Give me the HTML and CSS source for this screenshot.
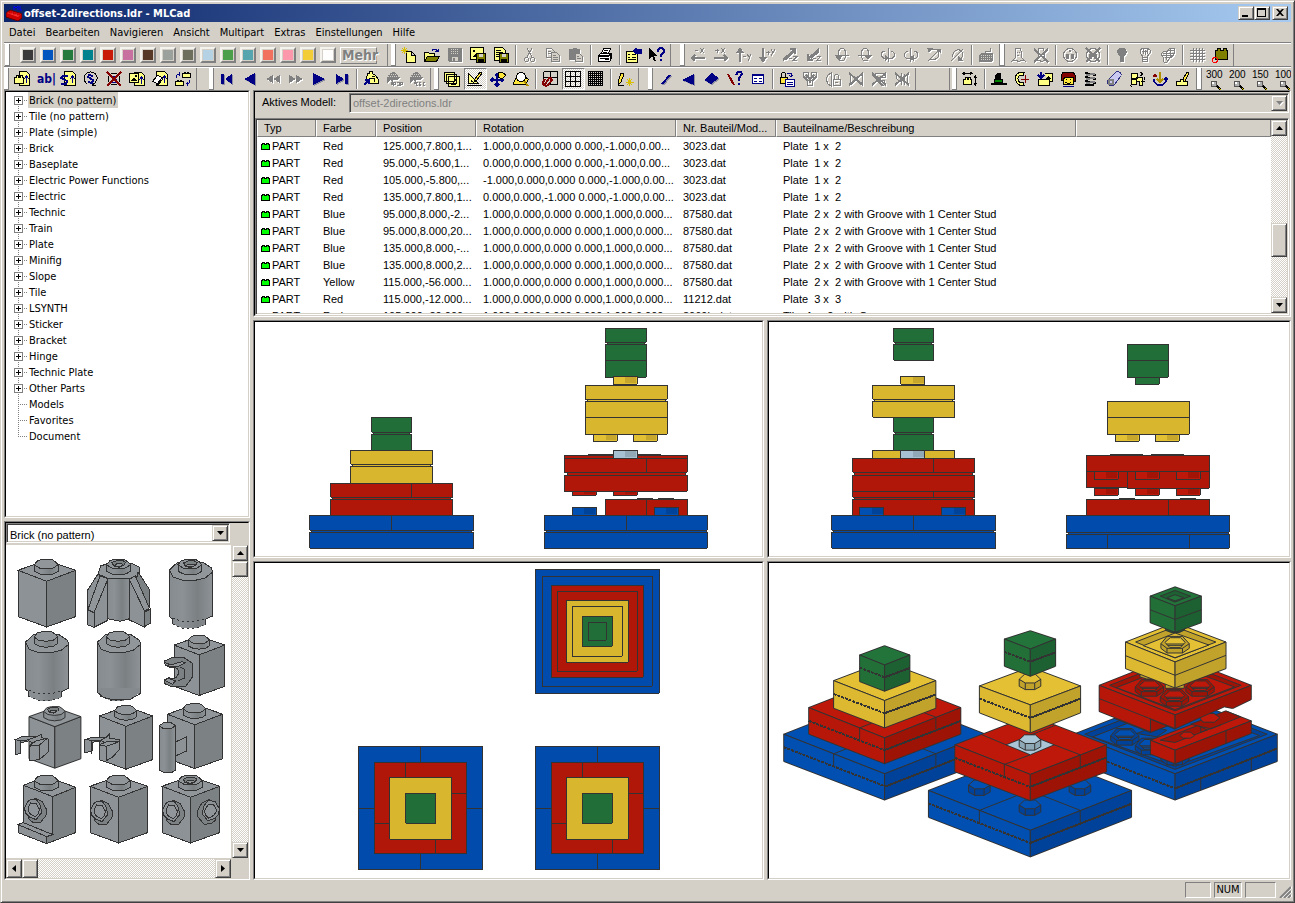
FILE: index.html
```html
<!DOCTYPE html>
<html lang="de">
<head>
<meta charset="utf-8">
<title>offset-2directions.ldr - MLCad</title>
<link rel="stylesheet" href="styles.css">
</head>
<body>
<div class="window">
<header class="titlebar">
  <svg class="app-icon" viewBox="0 0 16 16" aria-hidden="true"><path d="M8 1v4M12 1v4M8 1l2 2 2-2M14 1v4h2" stroke="#00f" fill="none"/><path d="M0 8l4-3 12 4v4l-4 3-12-4z" fill="#c00" stroke="#600"/><path d="M1 8l3-2 11 3-3 3z" fill="#f33"/><path d="M3 6h3v2H3zM7 7h3v2H7zM11 8h3v2h-3z" fill="#f00" stroke="#900" stroke-width=".6"/></svg>
  <h1>offset-2directions.ldr - MLCad</h1>
  <div class="caption-buttons">
    <button class="raised" aria-label="Minimieren"><svg viewBox="0 0 12 10"><path d="M2 7h6v2H2z"/></svg></button>
    <button class="raised" aria-label="Wiederherstellen"><svg viewBox="0 0 12 10"><path d="M1 0h9v9H1zM2 2v6h7V2z" fill-rule="evenodd"/></svg></button>
    <button class="raised close" aria-label="Schließen"><svg viewBox="0 0 12 10"><path d="M2 1h2l2 2 2-2h2L7 4.500 10 8H8L6 6 4 8H2l3-3.500z"/></svg></button>
  </div>
</header>
<nav class="menubar">
  <button>Datei</button><button>Bearbeiten</button><button>Navigieren</button><button>Ansicht</button><button>Multipart</button><button>Extras</button><button>Einstellungen</button><button>Hilfe</button>
</nav>

<div class="toolbar">
  <div class="group colors">
    <button class="swatch c-black" aria-label="Black"></button><button class="swatch c-blue" aria-label="Blue"></button><button class="swatch c-green" aria-label="Green"></button><button class="swatch c-teal" aria-label="Teal"></button><button class="swatch c-red" aria-label="Red"></button><button class="swatch c-pink" aria-label="Dark Pink"></button><button class="swatch c-brown" aria-label="Brown"></button><button class="swatch c-grey" aria-label="Grey"></button><button class="swatch c-dgrey" aria-label="Dark Grey"></button><button class="swatch c-lblue" aria-label="Light Blue"></button><button class="swatch c-bgreen" aria-label="Bright Green"></button><button class="swatch c-turq" aria-label="Turquoise"></button><button class="swatch c-salmon" aria-label="Salmon"></button><button class="swatch c-rose" aria-label="Pink"></button><button class="swatch c-yellow" aria-label="Yellow"></button><button class="swatch c-white" aria-label="White"></button>
    <button class="more" disabled>Mehr</button>
  </div>
  <div class="group file">
    <button aria-label="Neu"><svg viewBox="0 0 16 16"><path class="y" d="M5.500 4.500h5l4 4v7h-9zM10.500 4.500v4h4"/><path class="gold" d="M3.500 0v7M0 3.500h7M1 1l5 5M6 1l-5 5"/></svg></button>
    <button aria-label="Öffnen"><svg viewBox="0 0 16 16"><path class="y" d="M.5 13.500v-8h4l1 1h5v3"/><path class="olive" d="M.5 14.500l3-5h12l-3 5z"/><path class="ns" d="M8 3.500c2-2 4-2 6 1m0-3v3h-3"/></svg></button>
    <button aria-label="Speichern" disabled><svg viewBox="0 0 16 16"><path class="f" d="M1 1h14v14H2l-1-1z"/><path class="lt" d="M5 10h6v4H5z"/><path class="dots" d="M4 2.500h8M4 4.500h8M4 6.500h8"/><path class="f" d="M6 11h2v3H6z"/></svg></button>
    <button aria-label="Bild speichern"><svg viewBox="0 0 16 16"><path class="y" d="M.5.500h13v12H.5z"/><path class="f" d="M2 10l3-3 3 3zM3 3h2v2H3z"/><path class="olive" d="M6.500 6.500h9v9h-9z"/><path class="lt" d="M9 7h4v3H9z"/><path class="f" d="M8 12h6v3H8z"/></svg></button>
    <button aria-label="Liste speichern"><svg viewBox="0 0 16 16"><path class="y" d="M1.500.500h8l3 3v10h-11z"/><path d="M3 3.500h5M3 5.500h7M3 7.500h4M3 9.500h3"/><path class="olive" d="M6.500 6.500h9v9h-9z"/><path class="lt" d="M9 7h4v3H9z"/><path class="f" d="M8 12h6v3H8z"/></svg></button>
    <i class="sep"></i>
    <button aria-label="Ausschneiden" disabled><svg viewBox="0 0 16 16"><path d="M5 1l5 9M10 1l-5 9"/><circle cx="4.500" cy="12.500" r="2"/><circle cx="10.500" cy="12.500" r="2"/></svg></button>
    <button aria-label="Kopieren" disabled><svg viewBox="0 0 16 16"><path d="M1.500 1.500h5l3 3v6h-8zM3 4.500h3M3 6.500h4"/><path class="bg" d="M6.500 5.500h5l3 3v6h-8z"/><path d="M8 8.500h3M8 10.500h5M8 12.500h5"/></svg></button>
    <button aria-label="Einfügen" disabled><svg viewBox="0 0 16 16"><path class="f" d="M1 2h3l1-1h3l1 1h3v11H1z"/><path class="bg" d="M7.500 6.500h4l3 3v5h-7z"/><path d="M9 9.500h2M9 11.500h4"/></svg></button>
    <i class="sep"></i>
    <button aria-label="Drucken"><svg viewBox="0 0 16 16"><path class="w" d="M4.500 6.500l2-5h7l-2 5z"/><path class="w" d="M1.500 8.500l2-2h11v5l-2 3h-11z"/><path d="M2 8.500h11v5M2 9.500h10M3 11.500h8M1 14.500h11M12 8.500l2-2M7 3.500h4M6 5.500h4"/><path class="yd" d="M8.500 11.500h3v1h-3z"/></svg></button>
    <i class="sep"></i>
    <button aria-label="Eigenschaften"><svg viewBox="0 0 16 16"><path class="y" d="M.5 4.500h11v11H.5zM2 7.500h2M6 7.500h4M2 10.500h2M6 10.500h4M2 12.500h8"/><path class="n" d="M6 4l3-3 4 1h3v5h-4L9 7z"/></svg></button>
    <button aria-label="Hilfe"><svg viewBox="0 0 16 16"><path class="f" d="M0 1v11l3-3 2 5h2L5 9h4z"/><path class="ns2" d="M9 5V3l2-2h2l2 2v2l-3 3v2M12 12v2"/></svg></button>
  </div>
  <div class="group move">
    <button aria-label="-X" disabled><svg viewBox="0 0 16 16"><path class="s2" d="M3 11h12M5 8l-3 3 3 3"/><path d="M5 3.500h3M10 1l4 5M14 1l-4 5"/></svg></button>
    <button aria-label="+X" disabled><svg viewBox="0 0 16 16"><path class="s2" d="M1 11h12M11 8l3 3-3 3"/><path d="M2 3.500h4M4 1.500v4M8 1l4 5M12 1l-4 5"/></svg></button>
    <button aria-label="-Y" disabled><svg viewBox="0 0 16 16"><path class="s2" d="M4 15V3M1 6l3-4 3 4"/><path d="M7 9.500h3M11 7l2 3M15 7l-3 7"/></svg></button>
    <button aria-label="+Y" disabled><svg viewBox="0 0 16 16"><path class="s2" d="M4 1v12M1 10l3 4 3-4"/><path d="M7 5.500h4M9 3.500v4M12 2l2 4M16 2l-4 7"/></svg></button>
    <button aria-label="-Z" disabled><svg viewBox="0 0 16 16"><path class="s2" d="M1 13L12 3M8 2h5v5M3 13l8-8"/><path d="M7 11.500h3M11 9.500h4l-4 4h4"/></svg></button>
    <button aria-label="+Z" disabled><svg viewBox="0 0 16 16"><path class="s2" d="M14 2L3 12M3 7v6h5M14 4l-8 7"/><path d="M8 11.500h3M12 9.500h3l-3 4h4"/></svg></button>
    <i class="sep"></i>
    <button aria-label="Rotation X" disabled><svg viewBox="0 0 16 16"><path d="M1 8.500h14M4.500 12V6c0-6 7-6 7 0v4c-1 4-4 5-6 3M2 9l3 4 3-4"/><path class="f" d="M2 9h6l-3 4z"/></svg></button>
    <button aria-label="Rotation -X" disabled><svg viewBox="0 0 16 16"><path d="M1 8.500h14M11.500 12V6c0-6-7-6-7 0v4c1 4 4 5 6 3"/><path class="f" d="M8 9h6l-3 4z"/></svg></button>
    <button aria-label="Rotation Y" disabled><svg viewBox="0 0 16 16"><path d="M8.500 1v14M5 4.500H3C0 6 1 11 5 11.500h6c5-1 4-7 0-7"/><path class="f" d="M5 8v6l5-3z"/></svg></button>
    <button aria-label="Rotation -Y" disabled><svg viewBox="0 0 16 16"><path d="M7.500 1v14M11 4.500h2c3 2 2 7-2 7H5C0 11 1 4.500 5 4.500"/><path class="f" d="M11 8v6l-5-3z"/></svg></button>
    <button aria-label="Rotation Z" disabled><svg viewBox="0 0 16 16"><path d="M2 14L14 2M4 2.500h6c5 2 3 9-2 10H4"/><path class="f" d="M1 1h6L3 6zM10 2h5v4z"/></svg></button>
    <button aria-label="Rotation -Z" disabled><svg viewBox="0 0 16 16"><path d="M2 14L14 2M3.500 10c0-6 5-9 9-6 2 3 1 6-1 9"/><path class="f" d="M9 9v5h5z"/></svg></button>
    <i class="sep"></i>
    <button aria-label="Position eingeben" disabled><svg viewBox="0 0 16 16"><path class="f" d="M3 6h12v7l-1 2H1V9z"/><path class="dots" d="M3 8.500h11M3 10.500h11M3 12.500h10"/><path d="M7 6V4h5V1"/></svg></button>
  </div>
  <div class="group vis">
    <button aria-label="Geist" disabled><svg viewBox="0 0 16 16"><path d="M5 11V4c0-4 6-4 6 0v6l4 4-4-1-2 2-3-2-4 1zM7 5v1M9 5v1M7 8h2"/></svg></button>
    <button aria-label="Geist aus" disabled><svg viewBox="0 0 16 16"><path d="M5 11V4c0-4 6-4 6 0v6l4 4-4-1-2 2-3-2-4 1z"/><path class="s2" d="M1 2l14 13M15 2L1 15"/></svg></button>
    <i class="sep"></i>
    <button aria-label="Verstecken" disabled><svg viewBox="0 0 16 16"><circle cx="8" cy="8" r="6.500"/><path class="f" d="M7 3h2v2H7zM4 7h3v5H4zM9 7h3v5H9z"/></svg></button>
    <button aria-label="Einblenden" disabled><svg viewBox="0 0 16 16"><circle cx="8" cy="8" r="6.500"/><path class="f" d="M4 7h3v5H4zM9 7h3v5H9z"/><path class="s2" d="M1 1l14 14M15 1L1 15"/></svg></button>
    <i class="sep"></i>
    <button aria-label="Licht" disabled><svg viewBox="0 0 16 16"><path class="f" d="M4 2l2-1h4l2 1 1 3-2 4H5L3 5zM6 9h4v6H6z"/></svg></button>
    <button aria-label="Licht umschalten" disabled><svg viewBox="0 0 16 16"><path d="M5.500 9L3 6V3l3-2h4l3 2v3l-2.500 3v5h-5z"/><path d="M5 4.500h6M6 2v5M10 2v5M8 3v5"/><path d="M6 10.500h4M6 12.500h4"/></svg></button>
    <button aria-label="Alle Lichter" disabled><svg viewBox="0 0 16 16"><path d="M3 10L1 7l3-3 3 1 3-4h4l1 4-2 4-3 2-3 4H4z"/><path d="M3 6.500h11M3 8.500h10M5 10.500h6M8 3.500h6M6 5v8M10 2v8"/></svg></button>
    <i class="sep"></i>
    <button aria-label="Raster" disabled><svg viewBox="0 0 16 16"><path d="M4.500 1v14M7.500 1v14M10.500 1v14M13.500 1v14M1 3.500h15M1 6.500h15M1 9.500h15M1 12.500h15"/></svg></button>
    <button aria-label="Ursprung"><svg viewBox="0 0 16 16"><path class="olive" d="M3.500 12.500v-9h2v-2h3v2h3v-2h3v2h1v9z"/><circle class="redo" cx="3" cy="13" r="2.500"/></svg></button>
  </div>
</div>

<div class="toolbar second">
  <div class="group add">
    <button aria-label="Bauteil"><svg viewBox="0 0 16 16"><path class="y" d="M5.500.500h7l3 3v11h-10z"/><path class="y" d="M.5 12.500v-6h2v-2h2v2h2v-2h2v2h1v6z"/><path class="ns" d="M12.500 12V6M10 8l2.500-3 2.500 3"/></svg></button>
    <button aria-label="Kommentar"><span class="abl">ab|</span></button>
    <button aria-label="Schritt"><svg viewBox="0 0 16 16"><path class="y" d="M4.500.500h8l3 3v11h-11z"/><path class="ns2" d="M8 5H3L1 7l6 3-1 3H1"/><path class="ns" d="M12.500 12V6M10 8l2.500-3 2.500 3"/></svg></button>
    <button aria-label="Rotationsschritt"><svg viewBox="0 0 16 16"><path d="M4 13C0 10 0 4 5 1.500c5-2 10 2 9 7-1 2-2 4-4 5M9 11v3h4"/><path class="ns2" d="M10 5L6 4 5 6l5 3-1 3-4-1"/></svg></button>
    <button aria-label="Schritt löschen"><svg viewBox="0 0 16 16"><circle cx="8" cy="8" r="6"/><path class="ns" d="M10 5H7v3h3v3H6"/><path class="rs2" d="M1 1l14 14M15 1L1 15"/></svg></button>
    <button aria-label="Hintergrund"><svg viewBox="0 0 16 16"><path class="y" d="M5.500 1.500h7l3 3v10h-10z"/><path class="y" d="M.5 2.500h9v9h-9z"/><path class="f" d="M2 10l3-4 3 4zM6 4h2v2H6z"/><path class="ns" d="M12.500 13V7M10 9l2.500-3 2.500 3"/></svg></button>
    <button aria-label="Leeren"><svg viewBox="0 0 16 16"><path class="y" d="M4.500.500h8l3 3v11h-11z"/><path class="w" d="M.5 10.500l5-6 5 2-5 6zM5.500 12.500v2l5-6v-2"/><path class="ns" d="M12.500 12V6M10 8l2.500-3 2.500 3"/></svg></button>
    <button aria-label="Ersetzen"><svg viewBox="0 0 16 16"><path class="y" d="M7.500 6.500v-4h2v-1h1v1h2v-1h1v1h2v4zM.5 14.500v-4h2v-1h1v1h2v-1h1v1h2v4z"/><path class="ns" d="M1 7c0-4 2-4 4-4M4 1v4M15 9c0 4-2 4-4 4M12 11v4"/></svg></button>
  </div>
  <div class="group navi">
    <button aria-label="Anfang"><svg viewBox="0 0 16 16"><path class="n sh" d="M2 3h3v10H2zM13 3v10L6 8z"/></svg></button>
    <button aria-label="Zurück"><svg viewBox="0 0 16 16"><path class="n sh" d="M13 2v12L2 8z"/></svg></button>
    <button aria-label="Schnell zurück" disabled><svg viewBox="0 0 16 16"><path class="f" d="M8 4v8L1 8zM15 4v8L8 8z"/></svg></button>
    <button aria-label="Schnell vor" disabled><svg viewBox="0 0 16 16"><path class="f" d="M1 4v8l7-4zM8 4v8l7-4z"/></svg></button>
    <button aria-label="Vor"><svg viewBox="0 0 16 16"><path class="n sh" d="M2 2v12l12-6z"/></svg></button>
    <button aria-label="Ende"><svg viewBox="0 0 16 16"><path class="n sh" d="M2 3v10l8-5zM11 3h3v10h-3z"/></svg></button>
    <i class="sep"></i>
    <button aria-label="Modell"><svg viewBox="0 0 16 16"><path class="y" d="M3.500 8.500l1-6h2v-2h3v2l3 2 3 4v4h-9l-2-2zM6 7.500h5v3M9 5.500h3"/><path class="ns2" d="M1 14l5-5M2 9h4v4"/></svg></button>
    <button aria-label="POP" disabled><svg viewBox="0 0 16 16"><path class="f" d="M1 7l3-5 4-1 6 5-2 3H7v5H5V8l-4 4z"/><path class="dots" d="M2 5.500h11M3 3.500h8M5 10.500h2"/><path d="M7.500 15v-4h2v2h-2M11 11h2v3h-2M14.500 15v-4H16v2h-2"/></svg></button>
    <button aria-label="CEC" disabled><svg viewBox="0 0 16 16"><path class="f" d="M1 7l3-5 4-1 6 5-2 3H7v4H5V8l-4 4z"/><path class="dots" d="M2 5.500h11M3 3.500h8M5 10.500h2"/><path d="M9 11.500H7v3h2M12 11h-2v3.500h2M10 13h2M16 11.500h-2v3h2"/></svg></button>
  </div>
  <div class="group mode">
    <button aria-label="Ansicht"><svg viewBox="0 0 16 16"><path class="y" d="M.5 1.500h10v9H.5zM2.500 3.500h10v9h-10zM4.500 5.500h11v10h-11z"/><path class="f" d="M6 14l3-3 3 3zM11 8h2v2h-2z"/></svg></button>
    <button class="pressed" aria-label="Bearbeiten"><svg viewBox="0 0 16 16"><path class="y" d="M1.500 2.500v10h10zM4 8.500v2h2"/><path d="M0 14.500h15"/><path class="yd" d="M8 8l5-7 2 1-5 7-3 2z"/></svg></button>
    <button aria-label="Verschieben"><svg viewBox="0 0 16 16"><path class="ns2" d="M1 9h12M7 3v12M3 7L1 9l2 2M5 5l2-2 2 2M5 13l2 2 2-2M11 7l2 2-2 2"/><path class="yd" d="M8 2l4-1 4 3-4 4-4-2z"/></svg></button>
    <button aria-label="Zoom"><svg viewBox="0 0 16 16"><path class="yd" d="M.5 12.500l3-7h8l4 3-3 5h-12z"/><circle class="w" cx="8" cy="6" r="4.500"/><path class="gold2" d="M11 10l4 5"/></svg></button>
    <i class="sep"></i>
    <button aria-label="Einrasten"><svg viewBox="0 0 16 16"><path d="M1.500.500h14v13h-9M1.500 8V.5M8.500 1v12M2 6.500h14"/><path class="rs2" d="M8 6L3 13c-1 1-3 0-2-2l2-3M8 6l2 3-4 5c-1 1-3 1-4 0"/></svg></button>
    <button class="pressed" aria-label="Raster grob"><svg viewBox="0 0 16 16"><path d="M.5.500h15v15H.5zM5.500 0v16M10.500 0v16M0 5.500h16M0 10.500h16"/></svg></button>
    <button aria-label="Raster fein"><svg viewBox="0 0 16 16"><path d="M2.500 1v14M4.500 1v14M6.500 1v14M8.500 1v14M10.500 1v14M12.500 1v14M1 2.500h14M1 4.500h14M1 6.500h14M1 8.500h14M1 10.500h14M1 12.500h14"/><path d="M.5.500h14v14H.5z"/></svg></button>
    <i class="sep"></i>
    <button aria-label="Zeichnen"><svg viewBox="0 0 16 16"><path class="yd" d="M1 11l3-9 3 1-3 8-3 3z"/><path d="M1 14.500h6"/><path class="gold" d="M12.500 7v8M8.500 11h8M10 8l5 6M15 8l-5 6"/></svg></button>
  </div>
  <div class="group prim">
    <button aria-label="Linie"><svg viewBox="0 0 16 16"><path class="ns2 sh" d="M4 13l8-9"/></svg></button>
    <button aria-label="Dreieck"><svg viewBox="0 0 16 16"><path class="n sh" d="M1 9l12-6v11z"/></svg></button>
    <button aria-label="Viereck"><svg viewBox="0 0 16 16"><path class="n sh" d="M0 9l8-7 7 5-8 6z"/></svg></button>
    <button aria-label="Optionale Linie"><svg viewBox="0 0 16 16"><path class="rs2" d="M1 3l6 11"/><path class="ns2" d="M9 4l2-3h3l1 2-3 4v3M12 12v2"/></svg></button>
    <button aria-label="Tabelle"><svg viewBox="0 0 16 16"><path class="wn" d="M2.500 3.500h11v9h-11z"/><path class="ns" d="M2 4.500h12M4 7h3M9 7h3M4 10h3M9 10h3"/></svg></button>
    <i class="sep"></i>
    <button aria-label="Gruppe sperren"><svg viewBox="0 0 16 16"><path class="yd" d="M1 6h7v6H1z"/><path d="M2.500 6V3l1-2h2l1 2v3"/><path class="wn" d="M6.500 8.500h9v7h-9zM8 11.500h6M8 13.500h6"/><path class="ns" d="M8 2h4v4M10 4l2 2 2-2"/></svg></button>
    <button aria-label="Gruppe" disabled><svg viewBox="0 0 16 16"><circle cx="4" cy="4" r="3"/><circle cx="12" cy="4" r="3"/><circle cx="8" cy="12" r="3"/><path class="s2" d="M4 4l4 4 4-4M8 8v4M2 6l4 4M14 6l-4 4"/></svg></button>
    <button aria-label="Teile sperren" disabled><svg viewBox="0 0 16 16"><path d="M6 2L3 4 1 8l2 5 3 2V2zM9.500 8V5l1-2h2l1 2v3M8 8.500h7v6H8zM10 11.500h3"/></svg></button>
    <button aria-label="Lösen" disabled><svg viewBox="0 0 16 16"><path d="M3 4l5 5-5 5M13 4L8 9l5 5M2 3v11M14 3v11"/><path class="s2" d="M1 2l14 12M15 2L1 14"/></svg></button>
    <button aria-label="Auflösen" disabled><svg viewBox="0 0 16 16"><path d="M4 2.500h10v4H4zM6 9.500h7v4"/><path class="s2" d="M1 2l14 12M15 2L1 14M2 4l10 11"/></svg></button>
    <button aria-label="Alle lösen" disabled><svg viewBox="0 0 16 16"><path d="M4 3L2 7l3 3-3 4M13 2v12M10 3v11M7 2v12"/><path class="s2" d="M1 2l14 12M15 2L1 14"/></svg></button>
  </div>
  <i class="blank"></i>
  <div class="group gen">
    <button aria-label="Maße"><svg viewBox="0 0 16 16"><path class="y" d="M1.500 13.500v-5h2v-2h2v2h1v-2h2v2h1v5z"/><path d="M1 2.500h9M3 1L1 2.500 3 4M8 1l2 1.500L8 4M13.500 5v9M12 7l1.500-2L15 7M12 12l1.500 2 1.500-2"/></svg></button>
    <i class="sep"></i>
    <button aria-label="Grundplatte"><svg viewBox="0 0 16 16"><path class="f" d="M0 12h16v2H0z"/><path class="gr" d="M3.500 11.500v-3h8v3z"/><path class="f" d="M4 4l2-2h4v6H4z"/></svg></button>
    <button aria-label="Kreis"><svg viewBox="0 0 16 16"><path class="y" d="M10 1.500C4 0 1 4 1.500 8S5 15.500 10 14.500l-1-3c-3 1-5-1-5-4s3-4 5-3z"/><path class="rs" d="M7 8h8M11 4v8"/></svg></button>
    <button aria-label="Bild"><svg viewBox="0 0 16 16"><path class="y" d="M1.500 8.500h11v6h-11zM7.500 2.500h8v8h-3"/><path class="ns2" d="M4 1v5M1 4l3 3 3-3"/><path class="f" d="M8 8l3-3 3 3z"/></svg></button>
    <button aria-label="Minifigur"><svg viewBox="0 0 16 16"><path class="yd" d="M3 4h10v9H3z"/><path class="mar" d="M1 5l2-4h10l2 3v6h-2V6H5L3 9H1z"/><path d="M6 8v1M10 8v1M5 11l2 1h3l1-1"/><path class="ns" d="M3 15h11"/></svg></button>
    <button aria-label="Feder"><svg viewBox="0 0 16 16"><path class="s2" d="M2 2l11 2M2 6l11 2M2 10l11 2M2 14h9"/><path class="g2" d="M3 4l9-1M3 8l9-1M3 12l9-1"/></svg></button>
    <button aria-label="Schlauch"><svg viewBox="0 0 16 16"><path class="lav" d="M2 9l8-8c3-1 6 1 5 4l-7 9c-4 2-8-1-6-5z"/><circle class="g2" cx="5" cy="11" r="2.500"/></svg></button>
    <button aria-label="Rotor"><svg viewBox="0 0 16 16"><path class="y" d="M2.500 2.500h6v5h-6zM7.500 6.500h6v8h-3v-4h-3z"/><circle class="y" cx="5" cy="11" r="3"/><path class="dk" d="M11 1l3 2-3 2M15 6v3M1 14l2 2M12 10h4"/></svg></button>
    <button aria-label="Drehpunkt"><svg viewBox="0 0 16 16"><path class="ns2" d="M2 8c0 8 12 8 12 0M12 9l2-2 2 2"/><path class="rs2" d="M1 5h4M3 3v3"/><path class="gold2" d="M8 1v9M5 8l3 3 3-3"/></svg></button>
    <button aria-label="Text"><svg viewBox="0 0 16 16"><path class="y" d="M1.500 14.500v-4h4v-2h3v2h4v4z"/><path class="yd" d="M8 8l4-7 2 1-4 8-2 1z"/></svg></button>
  </div>
  <div class="group zoom">
    <button aria-label="Zoom 300"><span>300</span><svg viewBox="0 0 16 8"><use href="#lens"/></svg></button>
    <button aria-label="Zoom 200"><span>200</span><svg viewBox="0 0 16 8"><use href="#lens"/></svg></button>
    <button aria-label="Zoom 150"><span>150</span><svg viewBox="0 0 16 8"><use href="#lens"/></svg></button>
    <button aria-label="Zoom 100"><span>100</span><svg viewBox="0 0 16 8"><use href="#lens"/></svg></button>
  </div>
</div>

<svg class="defs" aria-hidden="true"><defs>
  <g id="lens"><circle cx="6" cy="4" r="3" fill="#b0b0b0" stroke="#555"/><path d="M4 2h2v2H4z" fill="#fff" stroke="none"/><path d="M9 6l4 4" stroke="#000" stroke-width="2" fill="none"/><path d="M11 8l2 2" stroke="#dc0" fill="none"/></g>
  <linearGradient id="cyl"><stop offset="0" stop-color="#868c90"/><stop offset=".3" stop-color="#8b9195"/><stop offset=".65" stop-color="#7b8083"/><stop offset="1" stop-color="#8d9397"/></linearGradient>
  <g id="studtop"><path fill="url(#cyl)" d="M0 16v20l16 8 20 3 22-3 13-8V16z"/><path class="pt" d="M10 4L26 0h26l12 8 7 8-13 10-22 3-22-3L0 16z"/></g>
  <g id="hole"><path class="pr" d="M22 10l14-6h18l9 5-6 9-14 6-16-4z"/><path class="pt" d="M28 19l8-5h16l4 4-12 4z"/></g>
  <g id="cube"><path class="pl" d="M0 33l86 33v137L0 172z"/><path class="pr" d="M86 66l87-33v139l-87 31z"/><path class="pt" d="M0 33L86 3l87 30-87 33z"/><use href="#studtop" x="49" y="0"/></g>
  <g id="round"><path fill="url(#cyl)" stroke="none" d="M0 32v140l10 8v15l30 12h38l30-10v-17l22-10V32z"/><path d="M0 32v140l10 8v15M130 32v138l-22 10v17"/><path class="dash" d="M10 176l26 10h44l28-8M10 195l30 12h38l30-10"/><path class="pt" d="M0 32l24-22h78l24 16 4 12-22 18-34 8H44L12 54z"/><use href="#studtop" x="26"/></g>
  <g id="sidestud"><path class="pr" d="M14 8L32 0l20 10 14 24-2 18-18 22-22-2L10 60z"/><path class="pl" d="M0 28L12 6l22-4 14 20 2 22-16 20-20-8L2 44z"/><path class="pt" d="M10 28l8-14 16 2 10 16-2 14-10 10-14-8-8-10z"/></g>
  <g id="pyramid-top">
    <path class="blue" d="M0 0h124v124H0z"/><path class="blue" d="M62 0v16M62 108v16M0 62h16M108 62h16"/>
    <path class="red" d="M16 16h92v92H16z"/><path class="red" d="M47 16v15M93 47h15M16 77h15M77 93v15"/>
    <path class="yellow" d="M31 31h62v62H31z"/><path class="green" d="M47 47h30v30H47z"/>
  </g>
  <g id="stud3d"><path class="sr" d="M0 17v21l18 10h28l18-10V17L46 26H18z"/><path class="sd" d="M18 26v22M46 26v22"/><path class="st" d="M0 17L16 2h32l16 15-18 11H18z"/></g>
  <g id="tube"><path class="sr" d="M0 28L18 6h46l20 22v14L64 56H18L0 42z"/><path class="st" d="M12 24l16-14h30l14 14-14 15H26z"/><path class="sd" d="M16 29h52M20 33h44M0 28l18 14v14M84 28L64 42v14M18 42h46"/></g>
</defs></svg>

<main class="workspace">
  <div class="left">
    <section class="pane tree" aria-label="Bauteile">
      <ul>
        <li class="branch"><button aria-label="Aufklappen"></button><a class="selected" href="#">Brick (no pattern)</a></li>
        <li class="branch"><button aria-label="Aufklappen"></button><a href="#">Tile (no pattern)</a></li>
        <li class="branch"><button aria-label="Aufklappen"></button><a href="#">Plate (simple)</a></li>
        <li class="branch"><button aria-label="Aufklappen"></button><a href="#">Brick</a></li>
        <li class="branch"><button aria-label="Aufklappen"></button><a href="#">Baseplate</a></li>
        <li class="branch"><button aria-label="Aufklappen"></button><a href="#">Electric Power Functions</a></li>
        <li class="branch"><button aria-label="Aufklappen"></button><a href="#">Electric</a></li>
        <li class="branch"><button aria-label="Aufklappen"></button><a href="#">Technic</a></li>
        <li class="branch"><button aria-label="Aufklappen"></button><a href="#">Train</a></li>
        <li class="branch"><button aria-label="Aufklappen"></button><a href="#">Plate</a></li>
        <li class="branch"><button aria-label="Aufklappen"></button><a href="#">Minifig</a></li>
        <li class="branch"><button aria-label="Aufklappen"></button><a href="#">Slope</a></li>
        <li class="branch"><button aria-label="Aufklappen"></button><a href="#">Tile</a></li>
        <li class="branch"><button aria-label="Aufklappen"></button><a href="#">LSYNTH</a></li>
        <li class="branch"><button aria-label="Aufklappen"></button><a href="#">Sticker</a></li>
        <li class="branch"><button aria-label="Aufklappen"></button><a href="#">Bracket</a></li>
        <li class="branch"><button aria-label="Aufklappen"></button><a href="#">Hinge</a></li>
        <li class="branch"><button aria-label="Aufklappen"></button><a href="#">Technic Plate</a></li>
        <li class="branch"><button aria-label="Aufklappen"></button><a href="#">Other Parts</a></li>
        <li><a href="#">Models</a></li>
        <li><a href="#">Favorites</a></li>
        <li><a href="#">Document</a></li>
      </ul>
    </section>
    <section class="pane parts">
      <div class="combo"><select aria-label="Gruppe"><option>Brick (no pattern)</option></select><span class="arrow raised"><svg viewBox="0 0 7 4"><path d="M0 0h7L3.500 4z"/></svg></span></div>
      <div class="thumbs">
        <svg viewBox="18 111 675 936" role="img" aria-label="Bauteilvorschau">
          <use href="#cube" x="54" y="153"/>
          <g transform="translate(262 153)">
            <path class="pt" d="M32 44l8-24 24-8h70l22 12v26l-30 10H66z"/>
            <path fill="url(#cyl)" d="M60 58h68v120l-30 8-38-8z"/>
            <path class="pl" d="M32 44l-32 50v60l6-4 42-94z"/><path class="pl" d="M20 160l40-102v126l-40 20z"/><path class="pt" d="M38 50l24 8-42 102L2 150z"/><path class="pl" d="M0 152l20 8v44L0 196z"/>
            <path class="pr" d="M152 38l34 52v52l-6 4-34-78z"/><path class="pl" d="M126 60l46 96v48l-46-22z"/><path class="pt" d="M126 60l18-10 42 96-14 10z"/><path class="pr" d="M172 158l16-8v42l-16 10z"/>
            <use href="#studtop" x="58"/><use href="#hole" x="52"/>
          </g>
          <use href="#round" x="508" y="153"/><use href="#hole" x="529" y="154"/>
          <use href="#round" x="76" y="370"/>
          <use href="#round" x="292" y="370"/><path class="cylfill" d="M294 538v16l20 12 20 8h52l34-20v-16z"/><path d="M292 536v16l20 16 28 7h48l34-20v-16"/>
          <use href="#cube" transform="translate(522 381) scale(.88 .89)"/>
          <path class="pr" d="M494 458l22-10h36l24 16v44l-20 28h-40l-22-10v-12l12-6 16 4c20-12 16-36-2-34-14 2-26-6-26-20z"/><path class="pt" d="M494 462l18 8 34-10 10 4-24 12-36-4zM494 516l12-6 20 8-8 10z"/><path d="M576 466v44M540 476l12 6v28l-18 8"/>
          <use href="#cube" transform="translate(87 595) scale(.9 .91)"/><use href="#hole" transform="translate(124 594) scale(.85)"/>
          <path class="pl" d="M46 694l18-8h44l16-8v10l20 4v40l-26 22-30 4v-42l18-10-20-8-24 6v30l-16 6z"/><path class="pt" d="M88 712l20-14 34-8-26 22zM46 694l18-8h44l-28 10-16 2z"/><path d="M88 712v46M118 712v40M62 698v40"/>
          <use href="#cube" transform="translate(298 592) scale(.93 .94)"/>
          <path class="pl" d="M254 694l20-6h44l10-10v12l30 4v30l-20 22-24 14-16-6v-44l18-6-10-6-30 4v26l-22 6z"/><path class="pt" d="M298 710l22-10h38l-38 14zM254 694l20-6h44l-20 10z"/><path d="M298 712v42M320 714v44M274 698v40"/>
          <use href="#cube" transform="translate(502 586) scale(.96)"/>
          <path class="pl" d="M524 702l36-16v42l-36 16z"/><path fill="url(#cyl)" d="M478 652v134l14 6h24l10-6V652z"/><path class="pt" d="M478 652l12-8h24l12 8-12 9h-24z"/>
          <g transform="translate(54 801)"><path class="pl" d="M16 30l88 34v116l-88-34z"/><path class="pr" d="M104 64l69-28v136l-87 33v-24l18-8z"/><path class="pt" d="M16 30l70-26 87 32-69 28z"/><path class="pt" d="M0 148l16-6 88 36-18 6z"/><path class="pl" d="M0 148l86 36v21L0 172z"/><use href="#studtop" x="49"/></g><use href="#sidestud" x="74" y="870"/>
          <use href="#cube" x="270" y="801"/><use href="#sidestud" x="272" y="876"/>
          <use href="#cube" x="486" y="801"/><use href="#hole" x="528" y="803"/><use href="#sidestud" x="488" y="876"/><use href="#sidestud" transform="matrix(-1 0 0 1 658 874)"/>
        </svg>
      </div>
      <div class="scroll v"><button class="raised" aria-label="Nach oben"><svg viewBox="0 0 7 4"><path d="M0 4h7L3.500 0z"/></svg></button><span class="thumb raised"></span><button class="raised last" aria-label="Nach unten"><svg viewBox="0 0 7 4"><path d="M0 0h7L3.500 4z"/></svg></button></div>
      <div class="scroll h"><button class="raised" aria-label="Nach links"><svg viewBox="0 0 4 7" class="side"><path d="M4 0v7L0 3.500z"/></svg></button><span class="thumb raised"></span><button class="raised last" aria-label="Nach rechts"><svg viewBox="0 0 4 7" class="side"><path d="M0 0v7l4-3.500z"/></svg></button></div>
    </section>
  </div>

  <div class="right">
    <section class="pane model">
      <div class="active-model"><label for="model">Aktives Modell:</label>
        <div class="combo disabled"><select id="model" disabled><option>offset-2directions.ldr</option></select><span class="arrow raised"><svg viewBox="0 0 7 4"><path d="M0 0h7L3.500 4z"/></svg></span></div>
      </div>
      <div class="list">
        <div class="rows">
        <table>
          <colgroup><col class="w-typ"><col class="w-farbe"><col class="w-pos"><col class="w-rot"><col class="w-nr"><col class="w-name"><col></colgroup>
          <thead><tr><th>Typ</th><th>Farbe</th><th>Position</th><th>Rotation</th><th>Nr. Bauteil/Mod...</th><th>Bauteilname/Beschreibung</th><th></th></tr></thead>
          <tbody>
            <tr><td><svg class="pi" viewBox="0 0 9 8"><path d="M.5 7.500v-5h1v-1h2v1h2v-1h2v1h1v5z"/></svg>PART</td><td>Red</td><td>125.000,7.800,1...</td><td>1.000,0.000,0.000 0.000,-1.000,0.00...</td><td>3023.dat</td><td>Plate  1 x  2</td><td></td></tr>
            <tr><td><svg class="pi" viewBox="0 0 9 8"><path d="M.5 7.500v-5h1v-1h2v1h2v-1h2v1h1v5z"/></svg>PART</td><td>Red</td><td>95.000,-5.600,1...</td><td>0.000,0.000,1.000 0.000,-1.000,0.00...</td><td>3023.dat</td><td>Plate  1 x  2</td><td></td></tr>
            <tr><td><svg class="pi" viewBox="0 0 9 8"><path d="M.5 7.500v-5h1v-1h2v1h2v-1h2v1h1v5z"/></svg>PART</td><td>Red</td><td>105.000,-5.800,...</td><td>-1.000,0.000,0.000 0.000,-1.000,0.00...</td><td>3023.dat</td><td>Plate  1 x  2</td><td></td></tr>
            <tr><td><svg class="pi" viewBox="0 0 9 8"><path d="M.5 7.500v-5h1v-1h2v1h2v-1h2v1h1v5z"/></svg>PART</td><td>Red</td><td>135.000,7.800,1...</td><td>0.000,0.000,-1.000 0.000,-1.000,0.00...</td><td>3023.dat</td><td>Plate  1 x  2</td><td></td></tr>
            <tr><td><svg class="pi" viewBox="0 0 9 8"><path d="M.5 7.500v-5h1v-1h2v1h2v-1h2v1h1v5z"/></svg>PART</td><td>Blue</td><td>95.000,8.000,-2...</td><td>1.000,0.000,0.000 0.000,1.000,0.000...</td><td>87580.dat</td><td>Plate  2 x  2 with Groove with 1 Center Stud</td><td></td></tr>
            <tr><td><svg class="pi" viewBox="0 0 9 8"><path d="M.5 7.500v-5h1v-1h2v1h2v-1h2v1h1v5z"/></svg>PART</td><td>Blue</td><td>95.000,8.000,20...</td><td>1.000,0.000,0.000 0.000,1.000,0.000...</td><td>87580.dat</td><td>Plate  2 x  2 with Groove with 1 Center Stud</td><td></td></tr>
            <tr><td><svg class="pi" viewBox="0 0 9 8"><path d="M.5 7.500v-5h1v-1h2v1h2v-1h2v1h1v5z"/></svg>PART</td><td>Blue</td><td>135.000,8.000,-...</td><td>1.000,0.000,0.000 0.000,1.000,0.000...</td><td>87580.dat</td><td>Plate  2 x  2 with Groove with 1 Center Stud</td><td></td></tr>
            <tr><td><svg class="pi" viewBox="0 0 9 8"><path d="M.5 7.500v-5h1v-1h2v1h2v-1h2v1h1v5z"/></svg>PART</td><td>Blue</td><td>135.000,8.000,2...</td><td>1.000,0.000,0.000 0.000,1.000,0.000...</td><td>87580.dat</td><td>Plate  2 x  2 with Groove with 1 Center Stud</td><td></td></tr>
            <tr><td><svg class="pi" viewBox="0 0 9 8"><path d="M.5 7.500v-5h1v-1h2v1h2v-1h2v1h1v5z"/></svg>PART</td><td>Yellow</td><td>115.000,-56.000...</td><td>1.000,0.000,0.000 0.000,1.000,0.000...</td><td>87580.dat</td><td>Plate  2 x  2 with Groove with 1 Center Stud</td><td></td></tr>
            <tr><td><svg class="pi" viewBox="0 0 9 8"><path d="M.5 7.500v-5h1v-1h2v1h2v-1h2v1h1v5z"/></svg>PART</td><td>Red</td><td>115.000,-12.000...</td><td>1.000,0.000,0.000 0.000,1.000,0.000...</td><td>11212.dat</td><td>Plate  3 x  3</td><td></td></tr>
            <tr><td><svg class="pi" viewBox="0 0 9 8"><path d="M.5 7.500v-5h1v-1h2v1h2v-1h2v1h1v5z"/></svg>PART</td><td>Red</td><td>105.000,-20.000...</td><td>1.000,0.000,0.000 0.000,1.000,0.000...</td><td>3069b.dat</td><td>Tile  1 x  2 with Groove</td><td></td></tr>
          </tbody>
        </table>
        </div>
        <div class="scroll v"><button class="raised" aria-label="Nach oben"><svg viewBox="0 0 7 4"><path d="M0 4h7L3.500 0z"/></svg></button><span class="track-before"></span><span class="thumb tall raised"></span><button class="raised last" aria-label="Nach unten"><svg viewBox="0 0 7 4"><path d="M0 0h7L3.500 4z"/></svg></button></div>
      </div>
    </section>

    <div class="views upper">
      <section class="pane view" aria-label="Vorne">
        <svg class="ortho" viewBox="255 322 507 234"><g transform="translate(.5 .5)">
          <path class="blue" d="M311 530h160v2H311z"/><path class="blue" d="M309 515h164v15H309zM391 515v15"/><path class="blue" d="M309 532h164v16H309z"/>
          <path class="red" d="M332 497h118v2H332z"/><path class="red" d="M330 483h122v14H330zM411 483v14"/><path class="red" d="M330 499h122v16H330z"/>
          <path class="yellow" d="M352 464h78v2h-78z"/><path class="yellow" d="M350 450h82v14h-82z"/><path class="yellow" d="M350 466h82v17h-82z"/>
          <path class="green" d="M373 432h36v2h-36z"/><path class="green" d="M371 417h40v15h-40z"/><path class="green" d="M371 434h40v16h-40z"/>
          <path class="green" d="M607 342h37v2h-37z"/><path class="green" d="M605 328h41v14h-41z"/><path class="green" d="M605 344h41v33h-41zM605 360h41"/>
          <path class="ylt" d="M613 376h24v8h-24z"/><path class="yrt" d="M625 377h11v6h-11z"/>
          <path class="yellow" d="M587 399h78v2h-78z"/><path class="yellow" d="M585 385h82v14h-82z"/><path class="yellow" d="M585 401h82v33h-82zM585 417h82"/>
          <path class="ylt" d="M593 434h24v7h-24zM633 434h24v7h-24z"/><path class="yrt" d="M606 435h10v5h-10zM646 435h10v5h-10z"/>
          <path class="red" d="M567 472h118v3H567z"/><path class="red" d="M564 455h123v17H564zM564 458h123M646 458v14M588 454h73"/><path class="red" d="M564 475h123v16H564z"/>
          <path class="lblt" d="M613 450h24v8h-24z"/><path class="lbrt" d="M625 451h11v6h-11z"/>
          <path class="rlt" d="M572 491h24v4h-24zM613 491h24v4h-24z"/><path class="rrt" d="M584 492h11v2h-11zM625 492h11v2h-11z"/>
          <path class="red" d="M605 499h82v16h-82zM646 499v16M637 498h16M658 498h16"/>
          <path class="blt" d="M572 507h24v8h-24zM654 507h24v8h-24z"/><path class="brt" d="M584 508h11v6h-11zM666 508h11v6h-11z"/>
          <path class="blue" d="M546 530h160v2H546z"/><path class="blue" d="M544 515h163v15H544zM626 515v15"/><path class="blue" d="M544 532h163v16H544z"/>
        </g></svg>
      </section>
      <section class="pane view" aria-label="Links">
        <svg class="ortho" viewBox="769 322 520 234"><g transform="translate(.5 .5)">
          <path class="green" d="M895 342h36v2h-36z"/><path class="green" d="M893 328h40v14h-40z"/><path class="green" d="M893 344h40v16h-40z"/>
          <path class="ylt" d="M900 376h24v8h-24z"/><path class="yrt" d="M912 377h11v6h-11z"/>
          <path class="yellow" d="M874 399h78v2h-78z"/><path class="yellow" d="M872 385h82v14h-82z"/><path class="yellow" d="M872 401h82v16h-82z"/>
          <path class="green" d="M895 432h36v2h-36z"/><path class="green" d="M893 417h40v15h-40z"/><path class="green" d="M893 434h40v16h-40z"/>
          <path class="yellow" d="M872 450h82v8h-82z"/><path class="lblt" d="M900 450h24v8h-24z"/><path class="lbrt" d="M912 451h11v6h-11z"/>
          <path class="red" d="M854 472h118v3H854zM854 497h118v2H854z"/><path class="red" d="M852 458h122v14H852zM933 458v14"/><path class="red" d="M852 475h122v22H852zM852 491h122M933 491v6"/><path class="red" d="M852 499h122v16H852z"/>
          <path class="blt" d="M859 507h24v8h-24zM941 507h24v8h-24z"/><path class="brt" d="M871 508h11v6h-11zM953 508h11v6h-11z"/>
          <path class="blue" d="M833 530h160v2H833z"/><path class="blue" d="M831 515h164v15H831zM913 515v15"/><path class="blue" d="M831 532h164v16H831z"/>
          <path class="green" d="M1127 344h41v33h-41zM1127 360h41"/><path class="glt" d="M1135 377h24v7h-24z"/>
          <path class="yellow" d="M1107 401h82v33h-82zM1107 417h82"/><path class="ylt" d="M1115 434h24v7h-24zM1155 434h24v7h-24z"/><path class="yrt" d="M1127 435h11v5h-11zM1167 435h11v5h-11z"/>
          <path class="red" d="M1110 454h33M1151 454h33M1086 455h123v16h-123z"/><path class="red" d="M1086 471h41v16h-41z"/><path class="red" d="M1127 471h82v17h-82z"/>
          <path class="rlt" d="M1094 471h24v8h-24zM1135 471h24v8h-24zM1176 471h24v8h-24zM1094 488h24v7h-24zM1135 488h24v7h-24zM1176 488h24v7h-24z"/><path class="rrt" d="M1106 472h11v6h-11zM1147 472h11v6h-11zM1188 472h11v6h-11zM1106 489h11v5h-11zM1147 489h11v5h-11zM1188 489h11v5h-11z"/>
          <path class="red" d="M1119 498h16M1180 498h16M1086 499h123v16h-123zM1168 499v16"/>
          <path class="blue" d="M1068 532h160v2h-160z"/><path class="blue" d="M1066 515h163v17h-163z"/><path class="blue" d="M1066 534h163v14h-163zM1107 534v14M1189 534v14"/>
        </g></svg>
      </section>
    </div>

    <div class="views lower">
      <section class="pane view" aria-label="Oben">
        <svg class="ortho" viewBox="255 563 507 316"><g transform="translate(.5 .5)">
          <path class="blue" d="M535 569h124v124H535z"/><path class="blue" d="M542 576h110v110H542z"/>
          <path class="red" d="M551 585h92v92h-92z"/><path class="red" d="M557 591h80v80h-80z"/>
          <path class="yellow" d="M566 600h62v62h-62z"/><path class="yellow" d="M572 606h50v50h-50z"/>
          <path class="green" d="M582 616h30v30h-30z"/><path class="green" d="M588 622h18v18h-18z"/>
          <use href="#pyramid-top" x="358" y="746"/><use href="#pyramid-top" x="535" y="746"/>
        </g></svg>
      </section>
      <section class="pane view" aria-label="3D">
        <svg class="iso" viewBox="769 563 520 316"><g transform="translate(765 560.5) scale(.338 .3333)">
          <!-- closed pyramid -->
          <g class="B"><path class="t" d="M54 522l299-119 300 119-300 119z"/><path class="l" d="M54 522l299 119v79L54 604z"/><path class="r" d="M353 641l300-119v82L353 720z"/><path class="dd" d="M54 561l299 117"/><path class="th" d="M353 680l300-118"/><path d="M202 581v36M505 581v36M202 581l38-15M505 581l-38-15"/></g>
          <g class="R"><path class="t" d="M128 442l225-89 226 89-226 91z"/><path class="l" d="M128 442l225 91v78l-225-89z"/><path class="r" d="M353 533l226-91v80l-226 89z"/><path class="dd" d="M128 482l225 88"/><path class="th" d="M353 570l226-88"/><path d="M279 503v36M279 503l36-14M505 471v36M505 471l-36-14"/></g>
          <g class="Y"><path class="t" d="M202 361l151-58 152 58-152 60z"/><path class="l" d="M202 361l151 60v82l-151-59z"/><path class="r" d="M353 421l152-60v83l-152 59z"/><path class="dd" d="M202 401l151 58"/><path class="th" d="M353 459l152-56"/></g>
          <g class="G"><path class="t" d="M279 284l74-28 75 28-75 30z"/><path class="l" d="M279 284l74 30v79l-74-29z"/><path class="r" d="M353 314l75-30v80l-75 29z"/><path class="dd" d="M279 322l74 29"/><path class="th" d="M353 351l75-28"/></g>
          <!-- pyramid seen from below -->
          <g class="B"><path class="t" d="M913 522l301-119 303 119-303 119z"/><path class="r" d="M946 522l268-106 273 106-273 106z"/><path class="t" d="M970 530l244-96 250 92-250 92z"/><path class="l" d="M913 522l301 119v79L913 604z"/><path class="r" d="M1214 641l303-119v82l-303 116z"/><path class="dd" d="M913 565l301 120"/><path class="th" d="M1214 685l303-120"/><path d="M1290 656v34M1440 597v36"/><use href="#tube" x="1023" y="499"/><use href="#tube" x="1096" y="528"/><use href="#tube" x="1172" y="558"/><path class="r" d="M1100 520l50-20 40 10-30 20z"/></g>
          <g class="R"><path class="l" d="M1035 465v10l106 42v-60z"/><path class="r" d="M1141 475v42l60-23z"/><path class="t" d="M1141 540l226-87 73 29-226 88z"/><path class="r" d="M1170 540l110-44 30 13-96 38z"/><path class="r" d="M1260 492l104-40 44 18-88 36z"/><path class="l" d="M1141 540l73 30v41l-73-29z"/><path class="r" d="M1214 570l226-88v38l-226 91z"/><path d="M1365 511v40M1290 498v18l60-22"/><path class="t" d="M1228 526l12-10h20l12 10-12 8h-22zM1285 470l14-10h30l18 12-16 14h-34z"/></g>
          <g class="R"><path class="t" d="M989 375l225-90 226 90-226 89z"/><path class="r" d="M1020 375l194-76 196 76-196 77z"/><path class="t" d="M1040 382l174-68 176 66-176 68z"/><path class="l" d="M989 375l225 89v43l-73-30v38l-152-61z"/><path class="r" d="M1214 464l226-89v43l-55 27-25-5-146 66z"/><path d="M989 415l225 90"/><use href="#tube" x="1096" y="352"/><use href="#tube" x="1246" y="352"/><use href="#tube" x="1170" y="382"/></g>
          <g class="Y"><path class="r" d="M1110 335v15l20 6h30v-20zM1260 350h40l20-10v-15h-60zM1185 370v14h56v-14z"/><path class="t" d="M1067 245l147-58 151 58-151 60z"/><path class="r" d="M1097 245l117-46 121 46-121 48z"/><path class="t" d="M1120 256l94-38 100 36-100 38z"/><path class="l" d="M1067 245l147 60v78l-147-58z"/><path class="r" d="M1214 305l151-60v80l-151 58z"/><path d="M1067 286l147 59 151-60"/><use href="#tube" x="1172" y="222"/></g>
          <g class="G"><path class="r" d="M1186 200v10l18 7h22l16-8v-9z"/><path class="t" d="M1140 107l74-28 78 28-78 29z"/><path class="r" d="M1170 107l44-17 46 17-46 18z"/><path class="t" d="M1190 112l24-9 26 9-26 9z"/><path class="l" d="M1140 107l74 29v80l-74-29z"/><path class="r" d="M1214 136l78-29v80l-78 29z"/><path d="M1140 148l74 29 78-29"/></g>
          <!-- pyramid pulled apart -->
          <g class="B"><path class="t" d="M483 691l302-119 300 119-300 120z"/><path class="l" d="M483 691l302 120v80L483 772z"/><path class="r" d="M785 811l300-120v81L785 891z"/><path class="dd" d="M483 730l302 119"/><path class="th" d="M785 849l300-118"/><path d="M634 751v36M933 751v36M634 751l299-119M933 751L634 632"/><use href="#stud3d" x="602" y="658"/><use href="#stud3d" x="900" y="658"/><use href="#stud3d" x="752" y="718"/></g>
          <g class="R"><path class="t" d="M561 554l224-88 226 88-226 89z"/><path class="l" d="M561 554l224 89v79l-224-87z"/><path class="r" d="M785 643l226-89v81l-226 87z"/><path class="dd" d="M561 593l224 88"/><path class="th" d="M785 680l226-88"/><path d="M708 613v38M933 584v36M640 523l73 31M708 613l77-29M933 584l-77-30M860 495l-75 30"/></g>
          <g class="A"><path class="t" d="M713 554l72-29 71 29-71 30z"/><use href="#stud3d" x="752" y="522"/></g>
          <g class="Y"><path class="t" d="M634 377l151-57 149 57-149 57z"/><path class="l" d="M634 377l151 57v84l-151-60z"/><path class="r" d="M785 434l149-57v81l-149 60z"/><path class="dd" d="M634 415l151 58"/><path class="th" d="M785 473l149-58"/><use href="#stud3d" x="752" y="340"/></g>
          <g class="G"><path class="t" d="M708 236l77-25 75 25-75 30z"/><path class="l" d="M708 236l77 30v82l-77-30z"/><path class="r" d="M785 266l75-30v82l-75 30z"/><path class="dd" d="M708 275l77 29"/><path class="th" d="M785 304l75-28"/></g>
        </g></svg>
      </section>
    </div>
  </div>
</main>

<footer class="statusbar"><span class="cell c1"></span><span class="cell c2">NUM</span><span class="cell c3"></span><svg class="resizer" viewBox="0 0 12 12"><path d="M1 12L12 1M5 12l7-7M9 12l3-3"/></svg></footer>
</div>
</body>
</html>
```
FILE: styles.css
```css
:root {
  --face: #d4d0c8;
  --shadow: #808080;
  --dark: #404040;
  --tahoma: "DejaVu Sans Condensed", "DejaVu Sans", sans-serif;
  --sans: "Liberation Sans", sans-serif;
}
* { box-sizing: border-box; }
body { margin: 0; background: var(--face); font: 11px/16px var(--tahoma); color: #000; }
button, select { font: inherit; color: inherit; margin: 0; padding: 0; border: 0; border-radius: 0; background: none; }
h1, ul { margin: 0; padding: 0; }
a { color: inherit; text-decoration: none; }
svg { display: block; }
.defs { position: absolute; width: 0; height: 0; }

.window {
  display: flex; flex-direction: column; height: 100vh; min-height: 600px; padding: 3px; overflow: hidden;
  border: 1px solid; border-color: var(--face) var(--dark) var(--dark) var(--face);
  box-shadow: inset 1px 1px #fff, inset -1px -1px var(--shadow);
}
.raised {
  background: var(--face); border: 1px solid; border-color: var(--face) var(--dark) var(--dark) var(--face);
  box-shadow: inset 1px 1px #fff, inset -1px -1px var(--shadow);
}

.titlebar { flex: 0 0 18px; display: flex; align-items: center; padding: 0 3px 0 2px; background: linear-gradient(to right, #0a246a, #a6caf0); color: #fff; }
.titlebar h1 { flex: 1; padding: 1px 0 0 2px; font-size: 11px; font-weight: bold; }
.app-icon { width: 16px; height: 16px; }
.caption-buttons { display: flex; }
.caption-buttons button { width: 16px; height: 14px; display: flex; align-items: center; justify-content: center; }
.caption-buttons .close { margin-left: 2px; }
.caption-buttons svg { width: 12px; height: 10px; }

.menubar { flex: 0 0 21px; display: flex; gap: 10px; align-items: center; padding: 1px 0 0 5px; border-bottom: 1px solid var(--shadow); }

.toolbar { flex: 0 0 24px; display: flex; align-items: center; border-bottom: 1px solid var(--shadow); border-top: 1px solid #fff; overflow: hidden; }
.toolbar.second { flex-basis: 23px; border-bottom: 0; }
.group { flex: none; display: flex; align-items: center; align-self: stretch; padding-right: 1px; border-right: 1px solid var(--shadow); }
.group::before { content: ""; align-self: stretch; width: 4px; margin-right: 2px; background: #fff; border-right: 1px solid var(--shadow); border-bottom: 1px solid var(--shadow); }
.group button { flex: none; width: 23px; height: 22px; padding-left: 3px; display: flex; align-items: center; }
.group svg { flex: none; width: 16px; height: 16px; fill: none; stroke: currentColor; stroke-width: 1; shape-rendering: crispEdges; overflow: visible; }
.group button:disabled { color: #808080; }
.group button:disabled svg { filter: drop-shadow(1px 1px 0 #fff); }
.group .pressed { padding-left: 2px; border: 1px solid; border-color: var(--shadow) #fff #fff var(--shadow); background: repeating-conic-gradient(#fff 0 25%, #d4d0c8 0 50%) 0 0 / 2px 2px; }
.sep { flex: none; width: 6px; height: 20px; background: linear-gradient(to right, transparent 2px, #808080 2px 3px, #fff 3px 4px, transparent 4px); }
.blank { flex: none; width: 34px; height: 22px; border-right: 1px solid var(--shadow); }
.file { margin-left: 3px; }
.move { margin-left: 9px; }
.prim { margin-left: 9px; }
.navi { margin-left: 12px; }
.mode { margin-left: 3px; }
.gen { margin-left: 2px; }
.zoom { border: 0; }
.f { fill: currentColor; stroke: none; }
.s2 { stroke-width: 2; }
.y { fill: #ffff84; }
.yd { fill: #ffe63c; stroke: #000; }
.w { fill: #fff; }
.lt { fill: #d4d0c8; stroke: none; }
.bg { fill: #d4d0c8; }
.olive { fill: #808000; }
.gold { stroke: #d8c000; }
.gold2 { stroke: #b09000; stroke-width: 2; }
.n { fill: #000084; stroke: none; }
.ns { stroke: #000084; }
.ns2 { stroke: #000084; stroke-width: 2; }
.wn { fill: #fff; stroke: #000084; }
.rs { stroke: #840000; }
.rs2 { stroke: #840000; stroke-width: 2; }
.redo { stroke: #f00; }
.mar { fill: #840000; }
.gr { fill: #008400; }
.g2 { stroke: #808080; stroke-width: 2; }
.lav { fill: #c8c8f0; stroke: #303080; }
.dk { stroke: #000; }
.dots { stroke: #d4d0c8; stroke-dasharray: 1 1; }
.sh { filter: drop-shadow(1px 1px 0 #9090a0); }
.abl { color: #000084; font: bold 12px/16px var(--tahoma); }
.group.zoom button { flex-direction: column; align-items: flex-start; padding: 2px 0 0; }
.zoom span { font: 10px/10px var(--sans); height: 10px; padding-left: 2px; }
.group.zoom svg { height: 8px; margin-left: 4px; }

.colors { padding-right: 10px; }
.colors::before { margin: 0 10px 0 1px; }
.group .swatch { width: 16px; height: 16px; margin-right: 4px; border: 2px solid; border-color: #f4f2ec #808080 #808080 #f4f2ec; box-shadow: inset 0 0 0 1px var(--face); }
.c-black { background: #3a3a3a; } .c-blue { background: #0055bf; } .c-green { background: #257a3e; } .c-teal { background: #00838f; }
.c-red { background: #c91a09; } .c-pink { background: #c870a0; } .c-brown { background: #583927; } .c-grey { background: #9ba19d; }
.c-dgrey { background: #6d6e5c; } .c-lblue { background: #b4d2e3; } .c-bgreen { background: #4b9f4a; } .c-turq { background: #55a5af; }
.c-salmon { background: #f2705e; } .c-rose { background: #fc97ac; } .c-yellow { background: #f2cd37; } .c-white { background: #fff; }
.group .more { width: 37px; height: 17px; padding-left: 1px; font: bold 14px/14px "DejaVu Sans Condensed", sans-serif; text-shadow: 1px 1px #fff; border: 1px solid; border-color: #fff #808080 #808080 #fff; }

.workspace { flex: 1; min-height: 0; display: grid; grid-template-columns: 246px 1fr; gap: 3px; }
.left, .right { min-width: 0; min-height: 0; display: grid; gap: 3px; }
.left { grid-template-rows: minmax(0, 429fr) minmax(0, 359fr); }
.right { grid-template-rows: 227px minmax(0, 238fr) minmax(0, 320fr); }
.views { display: grid; grid-template-columns: minmax(0, 511fr) minmax(0, 524fr); gap: 3px; min-height: 0; }
.pane {
  min-width: 0; min-height: 0; overflow: hidden; background: #fff;
  border: 1px solid; border-color: var(--shadow) #fff #fff var(--shadow); padding: 1px; position: relative;
}
.pane::after { content: ""; position: absolute; inset: 0; pointer-events: none; border: 1px solid; border-color: #000 var(--face) var(--face) #000; }

.tree ul { list-style: none; }
.tree li {
  display: flex; align-items: center; height: 16px; padding-left: 22px;
  background:
    repeating-linear-gradient(to bottom, #808080 0 1px, transparent 1px 2px) 12px 0 / 1px 100% no-repeat,
    repeating-linear-gradient(to right, #808080 0 1px, transparent 1px 2px) 12px 8px / 9px 1px no-repeat;
}
.tree li:first-child { background-position: 12px 8px; }
.tree li:last-child { background-size: 1px 8px, 9px 1px; }
.tree .branch { padding-left: 8px; }
.tree li button {
  width: 9px; height: 9px; margin-right: 5px; border: 1px solid var(--shadow);
  background: linear-gradient(#000, #000) 1px 3px / 5px 1px no-repeat, linear-gradient(#000, #000) 3px 1px / 1px 5px no-repeat, #fff;
}
.tree a { padding: 2px 2px 0 1px; line-height: 14px; white-space: nowrap; }
.tree .selected { background: var(--face); }

.combo { display: flex; height: 20px; background: #fff; border: 1px solid; border-color: var(--shadow) #fff #fff var(--shadow); box-shadow: inset 1px 1px var(--dark), inset -1px -1px var(--face); padding: 1px; font: 11px/16px var(--sans); }
.combo select { flex: 1; min-width: 0; appearance: none; padding-left: 2px; outline: 0; }
.arrow { width: 16px; display: flex; align-items: center; justify-content: center; }
.arrow svg, .scroll svg { width: 7px; height: 4px; }
.combo.disabled { background: var(--face); }
.combo.disabled select { color: #808080; opacity: 1; }
.combo.disabled svg { fill: #808080; filter: drop-shadow(1px 1px 0 #fff); }

.parts { display: grid; grid-template-columns: minmax(0, 1fr) 17px; grid-template-rows: 22px minmax(0, 1fr) 20px; background: var(--face); }
.parts .thumbs { grid-area: 2 / 1; background: #fff; min-height: 0; }
.thumbs svg { width: 100%; height: 100%; fill: none; stroke: #333; stroke-width: 1px; shape-rendering: crispEdges; }
.parts .combo { grid-area: 1 / 1; margin-right: 1px; }
.parts .combo select { padding-top: 2px; }
.parts > .v { grid-area: 2 / 2; margin-left: 1px; }
.parts > .h { grid-area: 3 / 1; margin-top: 1px; }
.thumbs path, .thumbs use, #cube path, #round path, #studtop path, #hole path, #sidestud path { vector-effect: non-scaling-stroke; }
.pl { fill: #8c9295; }
.pr { fill: #7c8184; }
.pt { fill: #90969a; }
.cylfill { fill: #848a8d; stroke: none; }
.dash { stroke-dasharray: 2 3; }

.scroll { display: flex; background: repeating-conic-gradient(#fff 0 25%, #d4d0c8 0 50%) 0 0 / 2px 2px; }
.scroll button, .thumb { flex: none; width: 16px; height: 16px; display: flex; align-items: center; justify-content: center; }
.scroll.v { flex-direction: column; }
.scroll.v .last { margin-top: auto; }
.scroll.h .last { margin-left: auto; }
.scroll.h button, .scroll.h .thumb { height: auto; }
.scroll .side { width: 4px; height: 7px; }
.scroll .tall { height: 34px; }
.track-before { height: 87px; }

.model { background: var(--face); display: flex; flex-direction: column; }
.active-model { flex: 0 0 26px; display: flex; align-items: flex-start; padding-top: 1px; }
.active-model label { width: 94px; padding: 1px 0 0 7px; font: 11px/16px var(--sans); }
.active-model .combo { flex: 1; }
.list { flex: 1; min-height: 0; display: flex; padding: 1px; background: #fff; border: 1px solid; border-color: var(--shadow) #fff #fff var(--shadow); box-shadow: inset 1px 1px var(--dark), inset -1px -1px var(--face); }
.rows { flex: 1; min-width: 0; overflow: hidden; }
table { width: 100%; table-layout: fixed; border-collapse: separate; border-spacing: 0; font: 11px/15px var(--sans); }
th, td { padding: 2px 0 0 7px; text-align: left; font-weight: normal; white-space: pre; overflow: hidden; height: 17px; }
th { height: 17px; padding: 1px 0 0 6px; background: var(--face); border-bottom: 1px solid var(--shadow); border-right: 1px solid var(--shadow); border-left: 1px solid #fff; }
td:first-child { padding-left: 4px; }
.w-typ { width: 59px; } .w-farbe { width: 60px; } .w-pos { width: 100px; } .w-rot { width: 200px; } .w-nr { width: 100px; } .w-name { width: 300px; }
.pi { display: inline-block; width: 9px; height: 8px; margin-right: 2px; fill: #0f0; stroke: #000; shape-rendering: crispEdges; }

.view svg { width: 100%; height: 100%; shape-rendering: crispEdges; stroke: #333; stroke-width: 1; }
.blue { fill: #004bab; } .red { fill: #b11708; } .yellow { fill: #d8b62e; } .green { fill: #216e39; }
.ylt { fill: #e2c033; } .yrt { fill: #c6a72b; stroke: none; }
.rlt { fill: #bd1809; } .rrt { fill: #a31407; stroke: none; }
.blt { fill: #004fb3; } .brt { fill: #00439b; stroke: none; }
.glt { fill: #23733b; }
.lblt { fill: #a7c1d2; } .lbrt { fill: #91a9b7; stroke: none; }
.iso path, #stud3d path, #tube path { vector-effect: non-scaling-stroke; }
.iso path:not([class]), .iso .dd, .iso .th { fill: none; }
.B { --t: #0050b4; --l: #004fb1; --r: #004199; }
.R { --t: #be180a; --l: #b71709; --r: #9d1306; }
.Y { --t: #e3c034; --l: #dcb930; --r: #c1a22b; }
.G { --t: #23743b; --l: #226f38; --r: #1d6031; }
.A { --t: #a9c5d6; --l: #a0bac9; --r: #8fa8b6; }
.t, .st { fill: var(--t); }
.l { fill: var(--l); }
.r, .sr { fill: var(--r); }
.sd { fill: none; }
.iso .th { stroke-width: 2px; }
.iso .dd { stroke-width: 2px; stroke-dasharray: 3 1; }

.statusbar { flex: 0 0 19px; display: flex; justify-content: flex-end; align-items: center; gap: 3px; }
.cell { height: 16px; border: 1px solid; border-color: var(--shadow) #fff #fff var(--shadow); line-height: 14px; text-align: center; }
.c1 { width: 26px; } .c2 { width: 28px; } .c3 { width: 31px; }
.resizer { width: 12px; height: 12px; margin-top: 4px; stroke: #808080; stroke-width: 2; filter: drop-shadow(1px 0 0 #fff); }
```
